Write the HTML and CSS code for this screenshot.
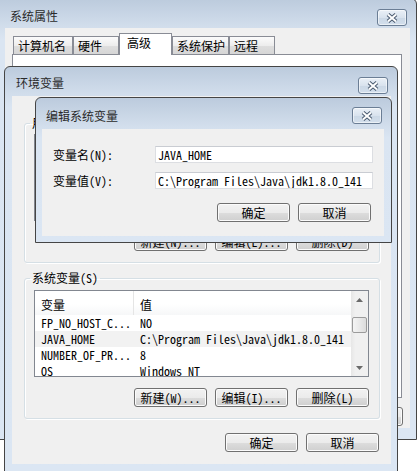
FILE: index.html
```html
<!DOCTYPE html>
<html lang="zh-CN">
<head>
<meta charset="utf-8">
<title>系统属性</title>
<link rel="stylesheet" href="styles.css">
</head>
<body>

<div class="win win-sys">
  <div class="titlebar tb-sys">
    <span class="title">系统属性</span>
    <span class="close"><svg width="14" height="12" viewBox="0 0 14 12"><path d="M3 2.5 L11 9.5 M11 2.5 L3 9.5" stroke="#4a5a70" stroke-width="4" fill="none"/><path d="M3 2.5 L11 9.5 M11 2.5 L3 9.5" stroke="#fff" stroke-width="2" fill="none"/></svg></span>
  </div>
  <div class="client sys-client">
    <div class="tabs">
      <div class="tab w60">计算机名</div>
      <div class="tab w46">硬件</div>
      <div class="tab sel w53">高级</div>
      <div class="tab w57">系统保护</div>
      <div class="tab w46">远程</div>
    </div>
    <div class="panel"></div>
    <div class="sys-btns">
      <button class="btn sbtn">确定</button>
      <button class="btn sbtn">取消</button>
      <button class="btn sbtn">应用(A)</button>
    </div>
  </div>
</div>

<div class="win win-env">
  <div class="titlebar tb-env">
    <span class="title">环境变量</span>
    <span class="close"><svg width="14" height="12" viewBox="0 0 14 12"><path d="M3 2.5 L11 9.5 M11 2.5 L3 9.5" stroke="#4a5a70" stroke-width="4" fill="none"/><path d="M3 2.5 L11 9.5 M11 2.5 L3 9.5" stroke="#fff" stroke-width="2" fill="none"/></svg></span>
  </div>
  <div class="client env-client">
    <fieldset class="group group-user">
      <legend>用户变量(U)</legend>
      <div class="list">
        <div class="list-main">
          <div class="lh"><div class="c1">变量</div><div class="c2">值</div></div>
        </div>
      </div>
      <div class="btn-row">
        <button class="btn">新建(N)...</button>
        <button class="btn">编辑(E)...</button>
        <button class="btn">删除(D)</button>
      </div>
    </fieldset>

    <fieldset class="group group-sys">
      <legend>系统变量(S)</legend>
      <div class="list">
        <div class="list-main">
          <div class="lh"><div class="c1">变量</div><div class="c2">值</div></div>
          <div class="row"><span class="c1 mono">FP_NO_HOST_C...</span><span class="c2 mono">NO</span></div>
          <div class="row hl"><span class="c1 mono">JAVA_HOME</span><span class="c2 mono">C:\Program Files\Java\jdk1.8.0_141</span></div>
          <div class="row"><span class="c1 mono">NUMBER_OF_PR...</span><span class="c2 mono">8</span></div>
          <div class="row"><span class="c1 mono">OS</span><span class="c2 mono">Windows_NT</span></div>
        </div>
        <div class="vscroll">
          <div class="arrow"><svg width="7" height="4" viewBox="0 0 7 4"><path d="M0 4 L3.5 0 L7 4Z" fill="#6a6a6a"/></svg></div>
          <div class="thumb"></div>
          <div class="spacer"></div>
          <div class="arrow"><svg width="7" height="4" viewBox="0 0 7 4"><path d="M0 0 L3.5 4 L7 0Z" fill="#6a6a6a"/></svg></div>
        </div>
      </div>
      <div class="btn-row">
        <button class="btn">新建(W)...</button>
        <button class="btn">编辑(I)...</button>
        <button class="btn">删除(L)</button>
      </div>
    </fieldset>

    <div class="env-btns">
      <button class="btn">确定</button>
      <button class="btn">取消</button>
    </div>
  </div>
</div>

<div class="win win-edit">
  <div class="titlebar tb-edit">
    <span class="title">编辑系统变量</span>
    <span class="close"><svg width="14" height="12" viewBox="0 0 14 12"><path d="M3 2.5 L11 9.5 M11 2.5 L3 9.5" stroke="#4a5a70" stroke-width="4" fill="none"/><path d="M3 2.5 L11 9.5 M11 2.5 L3 9.5" stroke="#fff" stroke-width="2" fill="none"/></svg></span>
  </div>
  <div class="client edit-client">
    <div class="form">
      <label class="lbl">变量名(N):</label>
      <div class="input mono">JAVA_HOME</div>
      <label class="lbl">变量值(V):</label>
      <div class="input mono">C:\Program Files\Java\jdk1.8.0_141</div>
    </div>
    <div class="edit-btns">
      <button class="btn">确定</button>
      <button class="btn">取消</button>
    </div>
  </div>
</div>

</body>
</html>
```
FILE: styles.css
```css
* { box-sizing: border-box; }
html, body { margin: 0; padding: 0; }
body {
  width: 418px;
  height: 471px;
  overflow: hidden;
  position: relative;
  background: #ffffff;
  font-family: "Noto Sans Mono CJK SC", "Noto Sans CJK SC", sans-serif;
  font-size: 12px;
  line-height: 14px;
  color: #000;
}

.mono { font-family: "Noto Sans Mono CJK SC", "Liberation Mono", monospace; }

/* windows */
.win {
  position: absolute;
  display: flex;
  flex-direction: column;
  border: 1px solid #454545;
  border-radius: 6px 6px 0 0;
  background: linear-gradient(#bccbdd 0, #d2deec 28px, #dae5f2 40px, #dbe6f3 100%);
}
.win-sys  { left: -4px; top: -2px; width: 421px; height: 442px; padding: 0 6px 11px 8px; }
.win-env  { left: 4px;  top: 66px; width: 394px; height: 406px; padding: 0 6px 7px 7px; }
.win-edit { left: 35px; top: 97px; width: 357px; height: 146px; padding: 0 7px 6px 6px; }

.titlebar {
  flex: none;
  display: flex;
  align-items: flex-start;
  justify-content: space-between;
}
.title { color: #2a2a2a; }
.tb-sys  { height: 29px; padding: 10px 3px 0 5px; }
.tb-env  { height: 29px; padding: 9px 3px 0 4px; }
.tb-env .close { margin-top: 1px; }
.tb-edit { height: 31px; padding: 9px 2px 0 4px; }
.tb-edit .title { margin-top: 2px; }

.close {
  width: 30px;
  height: 17px;
  border: 1px solid #6b7e95;
  border-radius: 3px;
  background: linear-gradient(#eaf0f7, #d9e3ee 50%, #cbd8e6 51%, #d3dfec);
  box-shadow: inset 0 0 0 1px rgba(255,255,255,0.55);
  display: flex;
  align-items: center;
  justify-content: center;
}

.client { flex: 1; background: #f0f0f0; }

/* system properties */
.tabs {
  display: flex;
  align-items: flex-end;
  height: 26px;
  padding-left: 8px;
}
.tab {
  height: 18px;
  border: 1px solid #898c95;
  border-bottom: none;
  padding: 2px 0 0 4px;
  line-height: 14px;
  background: linear-gradient(#fbfbfb, #ededed 50%, #dedede 51%, #d6d6d6);
  white-space: nowrap;
}
.tab.sel {
  height: 22px;
  background: #fff;
  margin-bottom: -1px;
  position: relative;
  z-index: 1;
  padding-left: 7px;
}
.w60 { width: 60px; }
.w46 { width: 46px; }
.w53 { width: 53px; }
.w57 { width: 57px; }

.panel {
  margin-left: 7px;
  width: 390px;
  height: 344px;
  background: #fff;
  border: 1px solid #898c95;
}
.sys-btns {
  display: flex;
  justify-content: flex-end;
  gap: 8px;
  margin-top: 9px;
  padding-right: 7px;
}
.sbtn { height: 18px; }

/* buttons */
.btn {
  width: 73px;
  height: 19px;
  padding: 0;
  border: 1px solid #707070;
  border-radius: 3px;
  background: linear-gradient(#f2f2f2, #ebebeb 50%, #dddddd 51%, #cfcfcf);
  box-shadow: inset 0 0 0 1px #fbfbfb;
  font: inherit;
  line-height: 17px;
  color: #000;
  white-space: nowrap;
}

/* environment variables */
.env-client { padding: 0 11px 0 12px; }
.group {
  margin: 0;
  padding: 0 10px 11px 5px;
  min-width: 0;
  border: 1px solid #d5dfe5;
  border-radius: 3px;
  box-shadow: inset 1px 1px 0 #fff, 1px 1px 0 #fff;
}
.group legend { padding: 0 2px; line-height: 14px; }
.group-user { margin-top: 20px; }
.group-user .list { margin-top: 4px; }
.group-sys { margin-top: 8px; }

.list {
  display: flex;
  width: 335px;
  height: 87px;
  margin: 5px 0 0 4px;
  border: 1px solid #828790;
  background: #fff;
  overflow: hidden;
}
.list-main { flex: 1; min-width: 0; }
.lh {
  display: flex;
  height: 24px;
  background: linear-gradient(#ffffff, #ffffff 55%, #f6f7f8);
}
.lh .c1 {
  width: 99px;
  border-right: 1px solid #e5e5e5;
  padding: 3px 0 0 6px;
  line-height: 21px;
}
.lh .c2 { padding: 3px 0 0 6px; line-height: 21px; }
.row { display: flex; height: 16px; line-height: 16px; white-space: nowrap; }
.row .c1 { width: 99px; flex: none; padding-left: 6px; }
.row .c2 { padding-left: 6px; }
.row.hl { background: #f2f2f2; }

.vscroll {
  width: 17px;
  flex: none;
  display: flex;
  flex-direction: column;
  align-items: center;
  background: linear-gradient(to right, #e6e6e6, #f0f0f0 25%, #f0f0f0);
}
.arrow {
  height: 17px;
  width: 100%;
  flex: none;
  display: flex;
  align-items: center;
  justify-content: center;
}
.thumb {
  width: 15px;
  height: 16px;
  margin-top: 9px;
  flex: none;
  border: 1px solid #9b9b9b;
  border-radius: 2px;
  background: linear-gradient(to right, #f4f4f4, #e9e9e9 50%, #dcdcdc);
}
.spacer { flex: 1; }

.btn-row {
  display: flex;
  justify-content: flex-end;
  gap: 8px;
  margin-top: 11px;
}
.env-btns {
  display: flex;
  justify-content: flex-end;
  gap: 8px;
  margin: 14px 1px 0 0;
}

/* edit dialog */
.form {
  display: grid;
  grid-template-columns: 102px 218px;
  row-gap: 9px;
  align-items: center;
  padding: 17px 0 0 11px;
}
.lbl { white-space: nowrap; }
.input {
  height: 17px;
  border: 1px solid #dcdee2;
  border-top-color: #c9ccd2;
  background: #fff;
  padding: 0 2px;
  line-height: 15px;
  white-space: nowrap;
  overflow: hidden;
}
.edit-btns {
  display: flex;
  justify-content: flex-end;
  gap: 8px;
  margin-top: 14px;
  padding-right: 13px;
}
```
